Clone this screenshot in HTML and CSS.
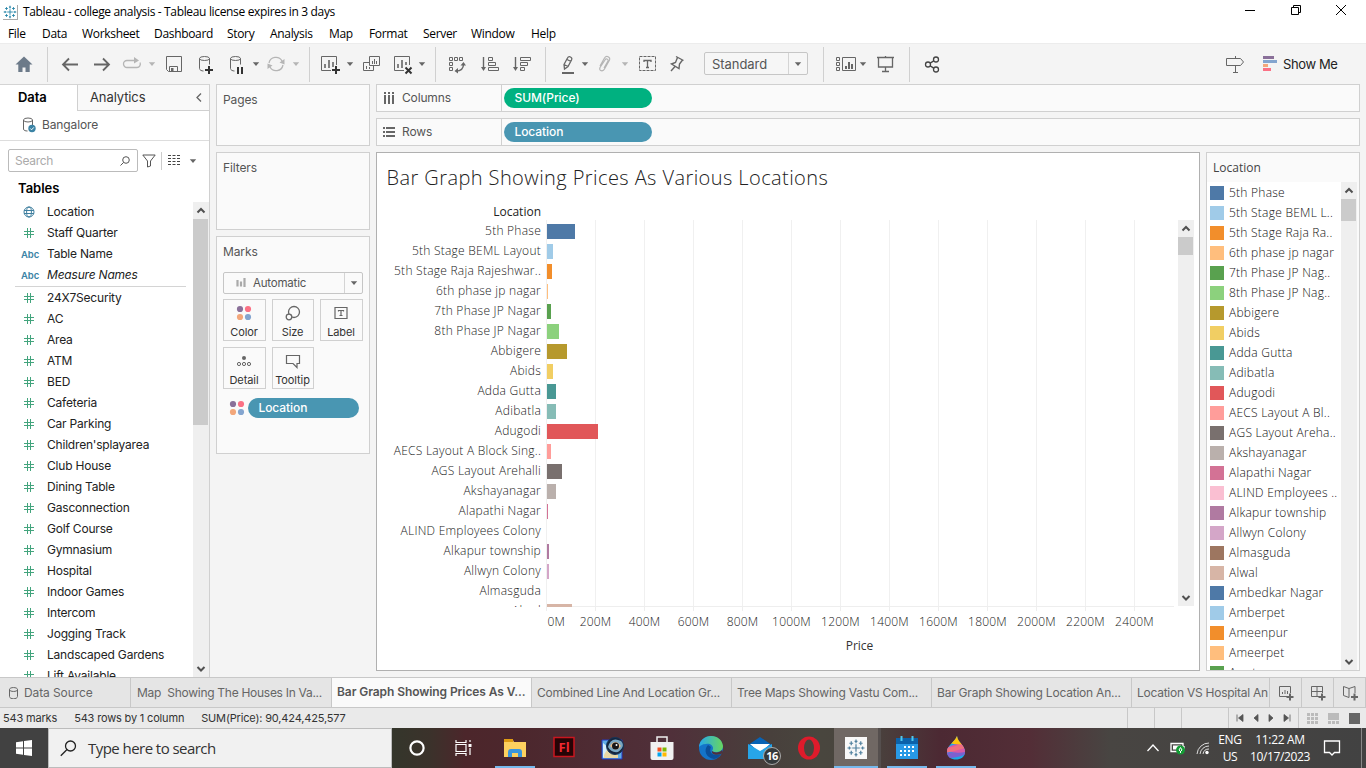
FILE: index.html
```html
<!DOCTYPE html>
<html lang="en">
<head>
<meta charset="utf-8">
<title>Tableau - college analysis</title>
<link rel="stylesheet" href="styles.css">
</head>
<body>
<svg class="defs" width="0" height="0">
  <symbol id="caret" viewBox="0 0 8 8"><path d="M.8 2.300h6.400L4 6z" fill="currentColor"/></symbol>
  <symbol id="up" viewBox="0 0 16 17"><path d="M4.500 10.500 8 7l3.500 3.500" fill="none" stroke="#505050" stroke-width="2"/></symbol>
  <symbol id="down" viewBox="0 0 16 17"><path d="M4.500 7 8 10.500 11.500 7" fill="none" stroke="#505050" stroke-width="2"/></symbol>
  <symbol id="dots" viewBox="0 0 16 16"><circle cx="4" cy="4" r="3.100" fill="#8a7099"/><circle cx="12" cy="4" r="3.100" fill="#fb7185"/><circle cx="4" cy="12" r="3.100" fill="#f3a77b"/><circle cx="12" cy="12" r="3.100" fill="#84a5cf"/></symbol>
  <symbol id="hash" viewBox="0 0 12 12"><path d="M4.500 1v10M7.500 1v10M1 4.500h10M1 7.500h10" stroke="#43a47d" stroke-width="1" fill="none"/></symbol>
  <symbol id="globe" viewBox="0 0 12 12"><g fill="none" stroke="#3f7f9f"><circle cx="6" cy="6" r="5"/><ellipse cx="6" cy="6" rx="2.400" ry="5"/><path d="M1 4.500h10M1 7.500h10"/></g></symbol>
  <symbol id="logo" viewBox="0 0 20 20"><path d="M10 6v8M6 10h8M10 1v4M8.500 3h3M10 15v4M8.500 17h3M1 10h4M3 8.500v3M15 10h4M17 8.500v3M5 3v4M3 5h4M15 3v4M13 5h4M5 13v4M3 15h4M15 13v4M13 15h4" stroke="currentColor" stroke-width="1.300" fill="none"/></symbol>
</svg>

<header class="titlebar">
  <span class="app-icon"><svg width="14" height="14"><use href="#logo"/></svg></span>
  <span class="app-title">Tableau - college analysis - Tableau license expires in 3 days</span>
  <span class="win-controls">
    <svg width="12" height="12" viewBox="0 0 12 12"><path d="M1 6.500h10"/></svg>
    <svg width="12" height="12" viewBox="0 0 12 12"><path d="M1.500 3.500h7v7h-7zM3.500 3.500v-2h7v7h-2"/></svg>
    <svg width="12" height="12" viewBox="0 0 12 12"><path d="M1 1l10 10M11 1 1 11"/></svg>
  </span>
</header>

<nav class="menubar">
  <span>File</span><span>Data</span><span>Worksheet</span><span>Dashboard</span><span>Story</span><span>Analysis</span><span>Map</span><span>Format</span><span>Server</span><span>Window</span><span>Help</span>
</nav>

<div class="toolbar">
  <div class="group g-home">
    <svg class="ic" viewBox="0 0 24 24"><path d="M12 4.500 3.500 12.500h2.800V20h4.200v-4.500h3V20h4.200v-7.500h2.800z" fill="#6c7a89" stroke="none"/></svg>
  </div>
  <div class="group g-nav">
    <svg class="ic" viewBox="0 0 24 24"><path d="M5 12.500h15M11 6.500l-6 6 6 6" stroke-width="1.800"/></svg>
    <svg class="ic" viewBox="0 0 24 24"><path d="M4 12.500h15M13 6.500l6 6-6 6" stroke-width="1.800"/></svg>
    <svg class="ic dim" viewBox="0 0 24 24"><path d="M15 8.500H7a3.500 3.500 0 0 0 0 7h10a3.500 3.500 0 0 0 3-5" stroke-width="1.300"/><path d="M14 5l5 3.500-5 3z" fill="#b5b5b5" stroke="none"/></svg>
    <svg class="ca dim"><use href="#caret"/></svg>
    <svg class="ic" viewBox="0 0 24 24"><path d="M4.500 4.500h15v15h-13l-2-2zM7.500 19.500v-5h8v5"/><path d="M9 16h2.500v3.500H9z" fill="#666" stroke="none"/></svg>
    <svg class="ic" viewBox="0 0 24 24"><path d="M5.500 6.500v10c0 1.500 2 2.500 4 2.500M15.500 6.500v6"/><ellipse cx="10.500" cy="6.500" rx="5" ry="2"/><path d="M15 14v8M11 18h8" stroke="#333" stroke-width="2"/></svg>
    <svg class="ic" viewBox="0 0 24 24"><path d="M5.500 6.500v10c0 1.500 2 2.500 4 2.500M15.500 6.500v6"/><ellipse cx="10.500" cy="6.500" rx="5" ry="2"/><path d="M13 15v7M17 15v7" stroke="#333" stroke-width="2"/></svg>
    <svg class="ca"><use href="#caret"/></svg>
    <svg class="ic dim" viewBox="0 0 24 24"><path d="M5 11a7 7 0 0 1 13-2M19 13a7 7 0 0 1-13 2" stroke-width="1.300"/><path d="M20.500 7v5.500l-5-2zM3.500 17v-5.500l5 2z" fill="#b5b5b5" stroke="none"/></svg>
    <svg class="ca dim"><use href="#caret"/></svg>
  </div>
  <div class="group g-sheet">
    <svg class="ic" viewBox="0 0 24 24"><path d="M13 18.500H3.500v-14h15V13"/><path d="M7 12v4M11 8v8M15 10v5" stroke-width="1.600"/><path d="M18 14v8M14 18h8" stroke="#333" stroke-width="2"/></svg>
    <svg class="ca"><use href="#caret"/></svg>
    <svg class="ic" viewBox="0 0 24 24"><path d="M9.500 4.500h10v9h-10zM9 10.500H3.500v8h10V14M6.500 14v3M9.500 15v2M12.500 9v3M14.500 7v5M16.500 9v3"/></svg>
    <svg class="ic" viewBox="0 0 24 24"><path d="M13 18.500H3.500v-14h15V13"/><path d="M7 12v4M11 8v8M15 10v3" stroke-width="1.600"/><path d="M14.500 15.500l6 6M20.500 15.500l-6 6" stroke="#333" stroke-width="2"/></svg>
    <svg class="ca"><use href="#caret"/></svg>
  </div>
  <div class="group g-sort">
    <svg class="ic" viewBox="0 0 24 24"><path d="M4.500 5.500h3v3h-3zM9.500 5.500h3v3h-3zM14.500 5.500h3v3h-3zM4.500 10.500h3v3h-3zM4.500 15.500h3v3h-3z"/><path d="M18.500 12c0 4.500-3 7-7.500 7" stroke-width="1.400"/><path d="M15.500 13.500l3-3.500 2.500 3.500zM13 16v5.500L9.500 19z" fill="#666" stroke="none"/></svg>
    <svg class="ic" viewBox="0 0 24 24"><path d="M10.500 5.500h4v3h-4zM10.500 10.500h7v3h-7zM10.500 15.500h10v3h-10z"/><path d="M5.500 5v12" stroke-width="1.400"/><path d="M3 15h5l-2.500 4z" fill="#666" stroke="none"/></svg>
    <svg class="ic" viewBox="0 0 24 24"><path d="M10.500 5.500h10v3h-10zM10.500 10.500h7v3h-7zM10.500 15.500h4v3h-4z"/><path d="M5.500 5v12" stroke-width="1.400"/><path d="M3 15h5l-2.500 4z" fill="#666" stroke="none"/></svg>
  </div>
  <div class="group g-format">
    <svg class="ic" viewBox="0 0 24 24"><path d="M8 12.500 11.500 6q1-2 3-1t1 3L12 14.500l-3.500 2.500zM8 12.500l4 2M11 7.500l4 2" stroke-width="1.300"/><path d="M6 21h12" stroke-width="2"/></svg>
    <svg class="ca"><use href="#caret"/></svg>
    <svg class="ic dim" viewBox="0 0 24 24"><path d="M7 14l4.500-8c2-3 6-1 5 2l-5 9c-1.500 3-6 2-4.500-1.500L12 8c1-2 3.500-1 3 1l-4 7" stroke-width="1.200"/></svg>
    <svg class="ca dim"><use href="#caret"/></svg>
    <svg class="ic" viewBox="0 0 24 24"><path d="M4.500 4.500h16v14h-16z" stroke-dasharray="3 1"/><path d="M9 10V8.500h7V10M12.500 8.500v7M11 15.500h3" stroke-width="1.300"/></svg>
    <svg class="ic" viewBox="0 0 24 24"><path d="M11 4.500l7.500 4M12.500 5.500l-2 5-4 1.500 7.500 4.500.5-4.500 3-4M10 14.500l-4 4.500" stroke-width="1.400"/></svg>
    <span class="fit"><span>Standard</span><i><svg class="ca"><use href="#caret"/></svg></i></span>
  </div>
  <div class="group g-cards">
    <svg class="ic" viewBox="0 0 24 24"><path d="M3.500 5.500h3v3h-3zM3.500 10.500h3v3h-3zM3.500 15.500h3v3h-3zM9.500 5.500h13v13h-13z"/><path d="M13 14v3M16 10v7M19 12v5" stroke-width="2"/></svg>
    <svg class="ca"><use href="#caret"/></svg>
    <svg class="ic" viewBox="0 0 24 24"><path d="M4 5.500h17M5.500 6v9h14V6M12.500 15v5M9 19.500h7M12.500 4v2" stroke-width="1.300"/></svg>
  </div>
  <div class="group g-share">
    <svg class="ic" viewBox="0 0 24 24"><g stroke="#444" stroke-width="1.300"><circle cx="8" cy="12.500" r="2.500"/><circle cx="16" cy="7.500" r="2.500"/><circle cx="16" cy="17.500" r="2.500"/><path d="M10.200 11.100l3.500-2.200M10.200 13.900l3.500 2.200"/></g></svg>
  </div>
  <div class="showme">
    <svg class="ic" viewBox="0 0 24 24"><path d="M4.500 6.500h14l3 3.500-3 3.500h-14zM13.500 4v2M13.500 13.500v7M11 20.500h5"/></svg>
    <svg width="14" height="16" viewBox="0 0 14 16"><path fill="#8a7099" d="M0 0h11v3H0z"/><path fill="#84a5cf" d="M0 4h14v3H0z"/><path fill="#f3a77b" d="M0 8h5v3H0z"/><path fill="#fb7185" d="M0 12h8v3H0z"/></svg>
    <span>Show Me</span>
  </div>
</div>

<main class="workspace">
  <aside class="datapane">
    <div class="pane-tabs"><b>Data</b><span class="analytics">Analytics<svg width="8" height="12" viewBox="0 0 8 12"><path d="M6 1.500 2 5.500 6 9.500" fill="none" stroke="#666" stroke-width="1.300"/></svg></span></div>
    <div class="source">
      <svg width="14" height="16" viewBox="0 0 14 16"><path d="M1.500 3v9c0 1.500 2 2 4 2M10.500 3v5" fill="none" stroke="#666"/><ellipse cx="6" cy="3" rx="4.500" ry="2" fill="none" stroke="#666"/><circle cx="10" cy="11.500" r="3.700" fill="#3b83a5"/><path d="M8.300 11.500l1.300 1.300 2.200-2.400" fill="none" stroke="#fff"/></svg>
      <span>Bangalore</span>
    </div>
    <div class="search-row">
      <span class="search"><span>Search</span><svg width="10" height="10" viewBox="0 0 10 10"><circle cx="6" cy="4" r="3.300" fill="none" stroke="#555"/><path d="M3.500 6.500.5 9.500" stroke="#555"/></svg></span>
      <svg class="funnel" width="14" height="14" viewBox="0 0 14 14"><path d="M.8 1h12.400L8.500 7v5l-3 1V7z" fill="none" stroke="#555"/></svg>
      <i class="divider"></i>
      <svg class="listic" width="12" height="11" viewBox="0 0 12 11"><path d="M0 .5h3M4.500 .5h3M9 .5h3M0 3.500h3M4.500 3.500h3M9 3.500h3M0 6.500h3M4.500 6.500h3M9 6.500h3M0 9.500h3M4.500 9.500h3M9 9.500h3" stroke="#444"/></svg>
      <svg class="ca"><use href="#caret"/></svg>
    </div>
    <h2 class="tables">Tables</h2>
    <div class="fields-wrap">
      <div class="fields" id="fields"></div>
      <div class="scroll fields-scroll"><svg><use href="#up"/></svg><i></i><svg><use href="#down"/></svg></div>
    </div>
  </aside>

  <section class="cards">
    <div class="card pages">Pages</div>
    <div class="card filters">Filters</div>
    <div class="card marks">
      <div class="marks-title">Marks</div>
      <div class="mark-type"><svg width="10" height="10" viewBox="0 0 10 10"><path d="M1.500 2v6.500M5 3.500v5M8.500 0v9" stroke="#aaa" stroke-width="2.200"/></svg><span>Automatic</span><i><svg class="ca"><use href="#caret"/></svg></i></div>
      <div class="mark-grid">
        <span class="mk"><svg viewBox="0 0 16 16"><use href="#dots"/></svg>Color</span>
        <span class="mk"><svg viewBox="0 0 16 16"><g fill="none" stroke="#666" stroke-width="1.300"><circle cx="9" cy="7" r="5.500"/><circle cx="4" cy="12" r="2.800" fill="#fafafa"/></g></svg>Size</span>
        <span class="mk"><svg viewBox="0 0 16 16"><path d="M2 2.500h12v11H2zM5.500 6.500v-1h5v1M8 5.500v5M6.500 10.500h3" fill="none" stroke="#666" stroke-width="1.200"/></svg>Label</span>
        <span class="mk"><svg viewBox="0 0 16 16"><circle cx="8" cy="5" r="2" fill="#666"/><g fill="none" stroke="#666"><circle cx="3" cy="11" r="1.600"/><circle cx="8" cy="11" r="1.600"/><circle cx="13" cy="11" r="1.600"/></g></svg>Detail</span>
        <span class="mk"><svg viewBox="0 0 16 16"><path d="M1.500 2.500h13v8H12v4l-4-4H1.500z" fill="none" stroke="#666" stroke-width="1.200"/></svg>Tooltip</span>
      </div>
      <div class="mark-pill"><svg width="16" height="16"><use href="#dots"/></svg><span class="pill blue">Location</span></div>
    </div>
  </section>

  <section class="canvas">
    <div class="shelf"><span class="shelf-name"><svg width="12" height="12" viewBox="0 0 12 12"><path d="M2 0v2M6 0v2M10 0v2M2 3v9M6 3v9M10 3v9" stroke="#666" stroke-width="2"/></svg>Columns</span><span class="pill green">SUM(Price)</span></div>
    <div class="shelf"><span class="shelf-name"><svg width="12" height="12" viewBox="0 0 12 12"><path d="M0 2h2M0 6h2M0 10h2M3 2h9M3 6h9M3 10h9" stroke="#666" stroke-width="2"/></svg>Rows</span><span class="pill blue">Location</span></div>
    <div class="sheet-row">
      <article class="view">
        <h1>Bar Graph Showing Prices As Various Locations</h1>
        <div class="row-header">Location</div>
        <div class="plot-wrap">
          <div class="plot" id="plot"></div>
          <div class="scroll plot-scroll"><svg><use href="#up"/></svg><i></i><svg><use href="#down"/></svg></div>
        </div>
        <div class="ticks"></div>
        <div class="axis" id="axis"></div>
        <div class="axis-title">Price</div>
      </article>
      <aside class="legend">
        <div class="legend-title">Location</div>
        <div class="legend-body">
          <div class="legend-list" id="legend"></div>
          <div class="scroll legend-scroll"><svg><use href="#up"/></svg><i></i><svg><use href="#down"/></svg></div>
        </div>
      </aside>
    </div>
  </section>
</main>

<div class="sheet-tabs">
  <span class="tab source-tab"><svg width="9" height="12" viewBox="0 0 9 12"><path d="M.5 2.500v7c0 3 8 3 8 0v-7c0-2.600-8-2.600-8 0zc0 2.600 8 2.600 8 0" fill="none" stroke="#666"/></svg>Data Source</span>
  <span class="tab pre">Map  Showing The Houses In Va...</span>
  <span class="tab active">Bar Graph Showing Prices As V...</span>
  <span class="tab">Combined Line And Location Gr...</span>
  <span class="tab">Tree Maps Showing Vastu Com...</span>
  <span class="tab">Bar Graph Showing Location An...</span>
  <span class="tab last">Location VS Hospital An</span>
  <span class="new"><svg viewBox="0 0 16 16"><path d="M9 11.500H1.500v-10h11V8M4.500 7v2M7 5v4M9.500 6v3"/><path d="M12 8.500v7M8.500 12h7" stroke-width="2"/></svg></span>
  <span class="new"><svg viewBox="0 0 16 16"><path d="M9 11.500H1.500v-10h11V8M1.500 6.500h11M7 1.500v10"/><path d="M12 8.500v7M8.500 12h7" stroke-width="2"/></svg></span>
  <span class="new"><svg viewBox="0 0 16 16"><path d="M7 3.500 1.500 1.500v9L7 12.500M7 3.500v9M7 3.500l6-2V8"/><path d="M12.500 8.500v7M9 12h7" stroke-width="2"/></svg></span>
</div>

<div class="status">
  <span class="s1">543 marks</span><span class="s2">543 rows by 1 column</span><span class="s3">SUM(Price): 90,424,425,577</span>
  <div class="status-right">
    <i></i><i></i><i class="wide"></i>
    <span class="pager">
      <svg viewBox="0 0 8 8"><path d="M1 .5v7M7 .5v7L2.500 4z"/></svg><svg viewBox="0 0 8 8"><path d="M6 .5v7L2 4z"/></svg><svg viewBox="0 0 8 8"><path d="M2 .5v7L6 4z"/></svg><svg viewBox="0 0 8 8"><path d="M7 .5v7M1 .5v7L5.500 4z"/></svg>
    </span>
    <span class="modes">
      <svg width="11" height="11" viewBox="0 0 11 11"><path d="M0 1.500h11M0 5.500h11M0 9.500h11" stroke="#bbb" stroke-width="3" stroke-dasharray="3 1"/></svg>
      <svg width="11" height="11" viewBox="0 0 11 11"><path d="M0 0h11v7H0zM0 8h3v3H0zM4 8h3v3H4zM8 8h3v3H8z" fill="#bbb"/></svg>
      <svg width="11" height="11"><path d="M0 0h11v11H0z" fill="#666"/></svg>
    </span>
  </div>
</div>

<footer class="taskbar">
  <span class="start"><svg width="16" height="16" viewBox="0 0 16 16"><path d="M0 2.200 7 1.200v6.400H0zM8 1l8-1v7.600H8zM0 8.400h7v6.400l-7-1zM8 8.400h8V16l-8-1z" fill="#fff"/></svg></span>
  <span class="win-search"><svg width="17" height="17" viewBox="0 0 17 17"><circle cx="10.500" cy="6" r="5" fill="none" stroke="#222" stroke-width="1.300"/><path d="M7 9.500.8 15.800" stroke="#222" stroke-width="1.300"/></svg>Type here to search</span>
  <div class="apps">
    <span class="app"><svg viewBox="0 0 24 24"><circle cx="12" cy="12" r="6.600" fill="none" stroke="#fff" stroke-width="2.200"/></svg></span>
    <span class="app"><svg viewBox="0 0 24 24"><g transform="translate(-2.500 0)" fill="none" stroke="#fff" stroke-width="1.200"><path d="M4.500 4v2.500h10V4M4.500 20v-2.500h10V20M4.500 8.500h10v7h-10zM18.500 4v2M18.500 12v7"/><path d="M17 8h3v3h-3z" fill="#fff" stroke="none"/></g></svg></span>
    <span class="app partial"><svg viewBox="0 0 24 24"><path d="M1 4h9l1 2h12v15H1z" fill="#fdd15f"/><path d="M1 3h9v3H1z" fill="#df9c13"/><path d="M5 21v-5q0-3 3-3h8q3 0 3 3v5h-4v-4H9v4z" fill="#3a96dd"/></svg></span>
    <span class="app"><svg viewBox="0 0 24 24"><path d="M2 1.500h20v19H2z" fill="#260406" stroke="#c9161f" stroke-width="1.500"/><text x="6.500" y="16" class="fl">Fl</text></svg></span>
    <span class="app"><svg viewBox="0 0 24 24"><path d="M1 4h20v19H1z" fill="#61aee8" stroke="#2538be"/><path d="M2 7l6 5-2 8-4 2z" fill="#d5effb"/><path d="M3 19q5-12 14 0v3H3z" fill="#e8d8a5"/><circle cx="14" cy="10" r="8.500" fill="#15253c" stroke="#14355a"/><path d="M7 11Q10 0 20 5q5 5-3 11-7 1-10-5" fill="#79a7c2"/><path d="M9 10q5-8 11 0-5 7-11 0" fill="#e7b984"/><circle cx="14.500" cy="10" r="3.500" fill="#161616"/><circle cx="15.500" cy="9" r="1" fill="#fff"/></svg></span>
    <span class="app"><svg viewBox="0 0 24 24"><path d="M7 6V1h10v5" fill="none" stroke="#eee" stroke-width="1.500"/><path d="M.5 6h23v16q0 2-2 2h-19q-2 0-2-2z" fill="#f1f1f1"/><path d="M7.500 11.500h4v4h-4z" fill="#f25022"/><path d="M12.500 11.500h4v4h-4z" fill="#7fba00"/><path d="M7.500 16.500h4v4h-4z" fill="#00a4ef"/><path d="M12.500 16.500h4v4h-4z" fill="#ffb900"/></svg></span>
    <span class="app"><svg viewBox="0 0 24 24"><defs><linearGradient id="eg"><stop stop-color="#27a8eb"/><stop offset="1" stop-color="#68d65e"/></linearGradient></defs><circle cx="12" cy="12" r="12" fill="#1474c9"/><path d="M0 11C1-3 22-4 24 10c0 7-9 7-11 5 3-4-1-8-6-7-4 0-6 2-7 3" fill="url(#eg)"/><path d="M9 9c-5 5-2 13 6 14 3 0 6-3 7-5-7 3-13-1-10-7" fill="#0b4f9a"/><path d="M13 15c2 2 8 2 10-1l1 3-2 1c-5 2-10 0-9-3" fill="#50313b"/></svg></span>
    <span class="app"><svg viewBox="0 0 24 24"><path d="M0 9 12 1l12 8v13H0z" fill="#0863b5"/><path d="M2 8h20L12 17z" fill="#fff"/><path d="M0 8l12 7 12-7v15H0z" fill="#27a5e8"/></svg><b class="badge">16</b></span>
    <span class="app"><svg viewBox="0 0 24 24"><ellipse cx="12" cy="12" rx="11" ry="11.500" fill="#df1b2b"/><ellipse cx="12" cy="12" rx="5" ry="8.500" fill="#4c443d"/></svg></span>
    <span class="app current"><svg viewBox="0 0 24 24"><path d="M1 1h22v22H1z" fill="#f8f8f8"/><use href="#logo" x="2.500" y="2.500" width="19" height="19" color="#52829f"/></svg></span>
    <span class="app open"><svg viewBox="0 0 24 24"><path d="M1 2h22v21H1z" fill="#2899e6"/><path d="M1 2h22v6H1z" fill="#0b62aa"/><path d="M6.500 0v5M17.500 0v5" stroke="#50c8ee" stroke-width="2"/><path d="M9 11h11M5 15h15M5 19h11" stroke="#fff" stroke-width="2" stroke-dasharray="2 2"/></svg></span>
    <span class="app open"><svg viewBox="0 0 24 24"><defs><clipPath id="drop"><path d="M13 0C14 7 21 9 21 16c0 10-18 10-18 0C3 9 10 7 13 0"/></clipPath></defs><g clip-path="url(#drop)"><path d="M0 0h24v24H0z" fill="#1ca8e6"/><path d="M0 16Q13 18 24 11v6Q15 22 5 22z" fill="#7c60d0"/><path d="M0 14Q12 5 24 9v6Q14 19 0 14" fill="#d75aa5"/><path d="M0 12Q14 11 17 6L24 9v2Q13 15 0 17z" fill="#ef6f80"/><path d="M5 0h15v8Q12 9 5 7z" fill="#ffc40c"/></g></svg></span>
  </div>
  <div class="tray">
    <svg width="14" height="10" viewBox="0 0 14 10"><path d="M1.500 8 7 2l5.500 6" fill="none" stroke="#fff" stroke-width="1.300"/></svg>
    <svg width="16" height="14" viewBox="0 0 16 14"><path d="M1 2.500h12v8H1zM14 5v3" fill="none" stroke="#fff" stroke-width="1.300"/><path d="M3 4.500h8v4H3z" fill="#fff"/><circle cx="10.500" cy="9" r="4.500" fill="#149c35"/><path d="M10.500 6.500q3 3 0 4-3-1 0-4M10.500 10v2" fill="none" stroke="#fff"/></svg>
    <svg width="14" height="14" viewBox="0 0 14 14"><g fill="none" stroke="#ddd"><path d="M1 13A12 12 0 0 1 13 2M4 13a9 9 0 0 1 9-8M7 13a6 6 0 0 1 6-5"/></g><circle cx="11" cy="11.500" r="1.700" fill="#fff"/></svg>
    <span class="lang">ENG<br>US</span>
    <span class="clock">11:22 AM<br>10/17/2023</span>
    <svg width="18" height="18" viewBox="0 0 18 18"><path d="M1.500 2h15v11.500h-5L9 16l-2.500-2.500h-5z" fill="none" stroke="#fff" stroke-width="1.300"/></svg>
    <i></i>
  </div>
</footer>
<script src="app.js"></script>
</body>
</html>
```
FILE: styles.css
```css
* { box-sizing: border-box; }
body { margin: 0; width: 1366px; height: 768px; overflow: hidden; display: flex; flex-direction: column; background: #f4f4f4; font: 13px/16px "Inter", "Roboto", sans-serif; color: #333; }
svg { display: block; flex: none; }
.defs { position: absolute; }
i { display: block; }

.titlebar { height: 24px; background: #fff; display: flex; align-items: center; padding-left: 3px; font: 12px/16px "Open Sans", sans-serif; color: #000; }
.app-icon { width: 15px; height: 15px; border-right: 1px solid #aaa; border-bottom: 1px solid #aaa; color: #2585a8; }
.app-title { margin-left: 5px; letter-spacing: -.34px; white-space: nowrap; }
.win-controls { margin-left: auto; display: flex; gap: 33.500px; padding-right: 19px; margin-top: -4px; }
.win-controls path { fill: none; stroke: #000; }
.menubar { height: 19px; background: #fff; display: grid; grid-template-columns: 34px 40px 72px 73px 43px 59px 40px 54px 48px 60px 40px; padding-left: 8px; align-items: center; font: 12px/19px "Open Sans", sans-serif; letter-spacing: -.32px; color: #000; }

.toolbar { height: 41px; display: flex; background: #f4f4f4; border-top: 1px solid #ececec; }
.group { display: grid; align-items: center; justify-items: center; border-right: 1px solid #d0d0d0; margin: 3px 0 2px; height: 35px; padding-bottom: 2px; }
.ic { width: 24px; height: 24px; fill: none; stroke: #666; }
.ic.dim { stroke: #b5b5b5; }
.ca { width: 8px; height: 8px; color: #666; }
.ca.dim { color: #b5b5b5; }
.g-home { width: 48px; }
.g-nav { width: 262px; padding-left: 8px; grid-template-columns: 28px 36px 24px 16px 28px 36px 26px 12px 28px 12px; }
.g-sheet { width: 126px; padding-left: 6px; grid-template-columns: 28px 12px 31px 31px 8px; }
.g-sort { width: 110px; padding-left: 5px; grid-template-columns: 32px 34px 30px; }
.g-format { width: 278px; padding-left: 10px; grid-template-columns: 24px 10px 30px 10px 34px 26px 14px 104px; }
.g-cards { width: 86px; padding-left: 7px; grid-template-columns: 28px 8px 36px; }
.g-share { width: 44px; padding-left: 0; border: 0; }
.fit { grid-column: 8; width: 104px; height: 23px; border: 1px solid #c6c6c6; border-radius: 2px; background: #f6f6f6; display: flex; align-items: center; justify-content: space-between; padding-left: 7px; color: #555; font-size: 13px; letter-spacing: -.05px; }
.fit i { width: 19px; height: 21px; border-left: 1px solid #d4d4d4; display: grid; place-items: center; }
.showme { margin-left: auto; width: 144px; display: flex; align-items: center; color: #222; font-size: 13px; letter-spacing: -.4px; white-space: nowrap; padding-bottom: 1px; }
.showme svg + svg { margin-left: 17px; }
.showme span { margin-left: 6px; }

.workspace { height: 593px; display: flex; }
.datapane { width: 210px; background: #fff; border-right: 1px solid #d0d0d0; border-top: 1px solid #d4d4d4; display: flex; flex-direction: column; }
.pane-tabs { height: 26px; display: flex; line-height: 25px; letter-spacing: -.1px; }
.pane-tabs b { width: 77px; padding-left: 18px; color: #000; font-weight: 600; }
.analytics { flex: 1; border-left: 1px solid #d0d0d0; border-bottom: 1px solid #d0d0d0; background: #f9f9f9; padding: 0 6px 0 12px; display: flex; justify-content: space-between; align-items: center; }
.source { height: 30px; border-bottom: 1px solid #ddd; display: flex; align-items: center; gap: 6px; padding: 0 0 2px 22px; color: #555; font-size: 12px; letter-spacing: -.12px; }
.search-row { display: flex; align-items: center; padding: 8px 0 0 8px; height: 31px; }
.search { width: 130px; height: 23px; border: 1px solid #bbb; border-radius: 2px; display: flex; align-items: center; justify-content: space-between; padding: 0 7px 0 6px; color: #aaa; font-size: 12px; letter-spacing: -.3px; }
.funnel { margin: 0 5px 0 4px; }
.divider { width: 1px; height: 18px; background: #ccc; }
.listic { margin: 0 9px 0 6px; }
.tables { margin: 9px 0 6px 18px; font-size: 13px; line-height: 15px; font-weight: 600; color: #000; }
.fields-wrap { flex: 1; min-height: 0; display: flex; justify-content: space-between; }
.fields { overflow: hidden; height: 475px; width: 186px; padding-top: 0; }
.field { height: 21px; display: flex; align-items: center; font-size: 12px; line-height: 19px; color: #222; white-space: nowrap; letter-spacing: -.2px; padding-bottom: 2px; }
.field span { margin-left: 12px; }
.field em { margin-left: 12px; }
.field svg { margin-left: 23px; width: 12px; height: 12px; }
.field small { width: 26px; margin-left: 21px; margin-right: -12px; font-size: 9.500px; font-weight: 600; color: #3b83a5; letter-spacing: -.1px; padding-top: 1px; }
.rule { height: 1px; background: #d4d4d4; margin: 0 0 1px 15px; width: 171px; }
.scroll { width: 16px; background: #efefef; display: grid; grid-template-rows: 17px auto 1fr; }
.scroll svg { width: 16px; height: 17px; }
.scroll svg:last-child { align-self: end; }
.scroll i { width: 15px; background: #cbcbcb; }
.fields-scroll i { height: 206px; }
.plot-scroll i { height: 18px; }
.legend-scroll i { height: 22px; }

.cards { width: 154px; margin-left: 6px; display: flex; flex-direction: column; gap: 6px; color: #555; font-size: 12px; letter-spacing: -.12px; }
.card { background: #fafafa; border: 1px solid #d0d0d0; padding: 7px 6px; }
.pages { height: 62px; }
.filters { height: 78px; }
.marks { height: 218px; }
.mark-type { margin-top: 12px; width: 140px; height: 22px; border: 1px solid #c6c6c6; border-radius: 2px; display: flex; align-items: center; padding-left: 12px; font-size: 11.500px; letter-spacing: -.2px; }
.mark-type span { margin-left: 7px; flex: 1; }
.mark-type i { width: 18px; height: 20px; border-left: 1px solid #d4d4d4; display: grid; place-items: center; }
.mark-grid { margin-top: 5px; display: grid; grid-template-columns: 43px 42px 43px; gap: 6px; }
.mk { height: 42px; border: 1px solid #d0d0d0; display: flex; flex-direction: column; align-items: center; padding: 5px 1px 0 0; font-size: 11px; line-height: 16px; letter-spacing: -.1px; color: #333; }
.mk svg { width: 16px; height: 16px; margin-bottom: 3px; }
.mark-pill { margin: 9px 0 0 6px; display: flex; align-items: center; gap: 3px; }
.pill { height: 20px; border-radius: 10px; color: #fff; font-weight: 500; font-size: 12px; line-height: 19px; padding-left: 10.500px; width: 148px; letter-spacing: -.08px; }
.mark-pill .pill { width: 111px; }
.blue { background: #4996b2; }
.green { background: #00b180; }

.canvas { margin-left: 6px; width: 984px; display: flex; flex-direction: column; gap: 6px; }
.shelf { height: 28px; border: 1px solid #d0d0d0; background: #fafafa; display: flex; align-items: center; }
.shelf-name { width: 125px; height: 26px; border-right: 1px solid #d0d0d0; display: flex; align-items: center; padding-left: 6px; gap: 7px; font-size: 12px; letter-spacing: -.15px; color: #555; margin-right: 2px; }
.sheet-row { display: flex; gap: 6px; height: 519px; }
.view { width: 824px; border: 1px solid #b0b0b0; background: #fff; display: flex; flex-direction: column; font-family: "Open Sans", "Noto Sans", sans-serif; }
.view h1 { margin: 12px 0 0 9.500px; font: 300 20px/26px "Open Sans", sans-serif; letter-spacing: .42px; color: #222; white-space: nowrap; }
.row-header { width: 164px; margin-top: 13px; text-align: right; font-size: 12px; line-height: 16px; color: #222; }
.plot-wrap { height: 387px; display: flex; }
.plot { width: 797px; height: 387px; padding-top: 1px; overflow: hidden; background: linear-gradient(#eee, #eee) 169px 386px / 628px 1px no-repeat, repeating-linear-gradient(90deg, #f0f0f0 0 1px, transparent 1px 49px) 169px 0 / 628px 387px no-repeat; }
.bar-row { height: 20px; display: flex; align-items: center; }
.bar-row span { width: 164px; display: flex; justify-content: flex-end; font-size: 12px; line-height: 20px; font-weight: 300; letter-spacing: .25px; color: #222; white-space: nowrap; }
.bar-row i { height: 15px; margin-left: 6px; }
.plot-scroll { margin-left: 4px; height: 386px; }
.ticks { margin-left: 169px; width: 628px; height: 4px; background: repeating-linear-gradient(90deg, #eee 0 1px, transparent 1px 49px); }
.axis { margin: 2px 0 0 170.500px; display: grid; grid-template-columns: 23.500px repeat(12, 49px); font-size: 12px; line-height: 17px; font-weight: 300; letter-spacing: .2px; color: #222; text-align: center; }
.axis span:first-child { text-align: left; }
.axis-title { width: 627px; margin: 8px 0 0 169px; text-align: center; font-size: 12px; color: #333; }

.legend { width: 154px; border: 1px solid #d0d0d0; background: #fafafa; font-family: "Open Sans", "Noto Sans", sans-serif; font-size: 12px; }
.legend-title { height: 29px; padding: 7px 6px 0; color: #444; }
.legend-body { height: 488px; width: 150px; display: flex; background: #fff; }
.legend-list { width: 134px; overflow: hidden; padding-top: 1px; }
.swatch-row { height: 20px; display: flex; align-items: center; padding-left: 3px; gap: 5px; line-height: 20px; font-weight: 300; letter-spacing: .25px; white-space: nowrap; color: #111; }
.swatch-row i { width: 14px; height: 14px; flex: none; }

.sheet-tabs { height: 31px; display: flex; border-top: 1px solid #c8c8c8; border-bottom: 1px solid #c8c8c8; background: #e5e5e5; color: #666; font-size: 12px; letter-spacing: -.22px; }
.tab { width: 200px; border-right: 1px solid #c8c8c8; padding-left: 5px; line-height: 29px; white-space: pre; overflow: hidden; }
.tab.pre { width: 201px; padding-left: 6px; letter-spacing: -.28px; }
.source-tab { width: 131px; display: flex; align-items: center; gap: 6px; padding-left: 9px; letter-spacing: -.1px; }
.tab.active { background: #fafafa; font-weight: 600; color: #555; line-height: 27px; letter-spacing: -.08px; }
.last { width: 138px; letter-spacing: -.25px; }
.new { width: 32px; border-right: 1px solid #c8c8c8; display: grid; place-items: center; }
.new svg { width: 16px; height: 16px; fill: none; stroke: #666; }

.status { height: 20px; display: flex; background: #eaeaea; padding-left: 3px; font-size: 11px; line-height: 20px; letter-spacing: -.17px; color: #333; white-space: nowrap; }
.s2 { margin-left: 17px; }
.s3 { margin-left: 17px; }
.status-right { margin-left: auto; display: flex; }
.status-right i { width: 27px; border-left: 1px solid #c8c8c8; }
.status-right i.wide { width: 47px; }
.pager { width: 71px; border-left: 1px solid #c8c8c8; border-right: 1px solid #c8c8c8; display: flex; align-items: center; justify-content: space-between; padding: 0 7px; }
.pager svg { width: 8px; height: 8px; fill: #555; stroke: #555; stroke-width: .8; }
.modes { display: flex; align-items: center; gap: 10px; padding: 0 6px 0 8px; }

.taskbar { height: 40px; display: flex; background: linear-gradient(90deg, #414141 0, #414141 48px, #34362b 392px, #3b322b 430px, #4c262b 465px, #4c272d 520px, #50303a 670px, #48403c 770px, #49463e 820px, #49443e 870px, #4c2933 940px, #532e37 1030px, #484542 1110px, #424242 1366px); color: #fff; font-family: "Open Sans", sans-serif; }
.start { width: 48px; display: grid; place-items: center; }
.win-search { width: 344px; background: #f1f1f1; border: 1px solid #bcbcbc; display: flex; align-items: center; gap: 11px; padding-left: 11px; font-size: 15px; letter-spacing: -.55px; color: #333; }
.apps { display: grid; grid-template-columns: repeat(12, 49px); }
.app { display: grid; place-items: center; position: relative; }
.app svg { width: 24px; height: 24px; }
.fl { font: 700 13px "Open Sans", sans-serif; fill: #ef2930; }
.badge { position: absolute; left: 28px; top: 19px; width: 18px; height: 18px; border: 1px solid #aaa; border-radius: 50%; background: #35393b; font-size: 11px; line-height: 15px; text-align: center; letter-spacing: -.5px; }
.open, .partial { background: linear-gradient(#76b9ed, #76b9ed) 5px 100% / 40px 2px no-repeat; }
.current { margin: 0 1px; border-right: 3px solid #554f4e; background: linear-gradient(#76b9ed, #76b9ed) 0 100% / 100% 2px no-repeat border-box, #706864; }
.tray { margin-left: auto; width: 220px; display: flex; align-items: center; font-size: 12px; letter-spacing: -.35px; line-height: 17px; text-align: center; }
.tray svg + svg { margin-left: 10px; }
.lang { width: 34px; margin-left: 3px; }
.clock { width: 66px; }
.tray .clock + svg { margin-left: 10px; }
.tray i { margin-left: auto; margin-right: 4px; width: 1px; height: 40px; background: #888; }
```
FILE: app.js
```js
const palette = ['#4e79a7', '#a0cbe8', '#f28e2b', '#ffbe7d', '#59a14f', '#8cd17d', '#b6992d', '#f1ce63', '#499894', '#86bcb6', '#e15759', '#ff9d9a', '#79706e', '#bab0ac', '#d37295', '#fabfd2', '#b07aa1', '#d4a6c8', '#9d7660', '#d7b5a6'];

const bars = [['5th Phase', 28], ['5th Stage BEML Layout', 6], ['5th Stage Raja Rajeshwar..', 5], ['6th phase jp nagar', 1], ['7th Phase JP Nagar', 4], ['8th Phase JP Nagar', 12], ['Abbigere', 20], ['Abids', 6], ['Adda Gutta', 9], ['Adibatla', 9], ['Adugodi', 51], ['AECS Layout A Block Sing..', 4], ['AGS Layout Arehalli', 15], ['Akshayanagar', 9], ['Alapathi Nagar', 1], ['ALIND Employees Colony', 0], ['Alkapur township', 2], ['Allwyn Colony', 2], ['Almasguda', 0], ['Alwal', 25]];

const legend = ['5th Phase', '5th Stage BEML L..', '5th Stage Raja Ra..', '6th phase jp nagar', '7th Phase JP Nag..', '8th Phase JP Nag..', 'Abbigere', 'Abids', 'Adda Gutta', 'Adibatla', 'Adugodi', 'AECS Layout A Bl..', 'AGS Layout Areha..', 'Akshayanagar', 'Alapathi Nagar', 'ALIND Employees ..', 'Alkapur township', 'Allwyn Colony', 'Almasguda', 'Alwal', 'Ambedkar Nagar', 'Amberpet', 'Ameenpur', 'Ameerpet', 'Amrtur'];

const measures = ['24X7Security', 'AC', 'Area', 'ATM', 'BED', 'Cafeteria', 'Car Parking', "Children'splayarea", 'Club House', 'Dining Table', 'Gasconnection', 'Golf Course', 'Gymnasium', 'Hospital', 'Indoor Games', 'Intercom', 'Jogging Track', 'Landscaped Gardens', 'Lift Available'];

const icon = (id) => `<svg><use href="#${id}"/></svg>`;

document.getElementById('plot').innerHTML = bars.map(([name, width], i) =>
  `<div class="bar-row"><span>${name}</span><i style="width:${width}px;background:${palette[i]}"></i></div>`).join('');

document.getElementById('legend').innerHTML = legend.map((name, i) =>
  `<div class="swatch-row"><i style="background:${palette[i % 20]}"></i><span>${name}</span></div>`).join('');

document.getElementById('axis').innerHTML = Array.from({ length: 13 }, (_, i) => `<span>${i * 200}M</span>`).join('');

document.getElementById('fields').innerHTML =
  `<div class="field">${icon('globe')}<span>Location</span></div>` +
  `<div class="field">${icon('hash')}<span>Staff Quarter</span></div>` +
  '<div class="field"><small>Abc</small><span>Table Name</span></div>' +
  '<div class="field"><small>Abc</small><em>Measure Names</em></div>' +
  '<div class="rule"></div>' +
  measures.map((name) => `<div class="field">${icon('hash')}<span>${name}</span></div>`).join('');
```
